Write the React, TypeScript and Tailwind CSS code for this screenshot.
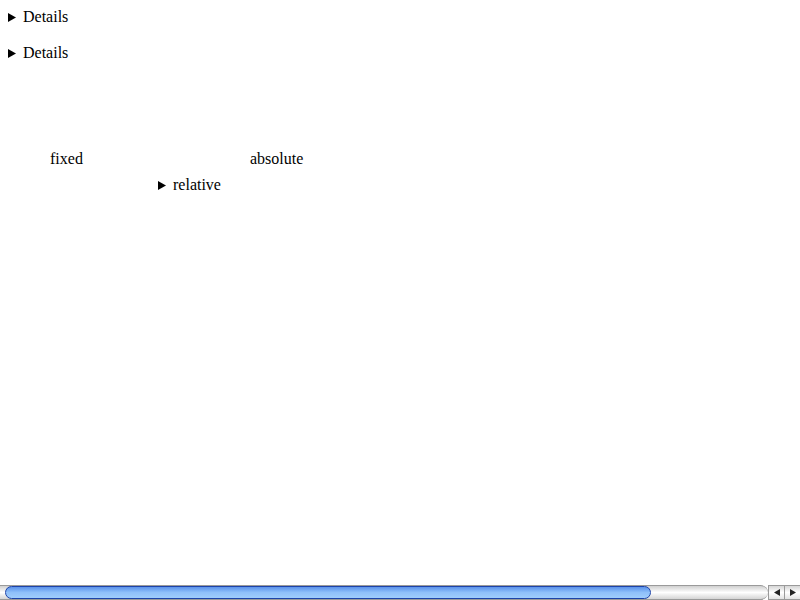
function Marker() {
  return (
    <svg width="8" height="9" viewBox="0 0 8 9" className="shrink-0">
      <path d="M0 0L8 4.5L0 9z" fill="#000" />
    </svg>
  );
}

function Toggle({ label }: { label: string }) {
  return (
    <details>
      <summary className="flex list-none items-center gap-[7px] leading-[18px] [&::-webkit-details-marker]:hidden">
        <Marker />
        <span>{label}</span>
      </summary>
    </details>
  );
}

export default function App() {
  return (
    <div className="flex h-screen w-full flex-col bg-white font-['Liberation_Serif'] text-base text-black">
      <div className="flex flex-col gap-[18px] px-2 pt-2">
        <Toggle label="Details" />
        <Toggle label="Details" />
      </div>

      <div className="mt-[88px] flex leading-[18px]">
        <div className="w-[250px] pl-[50px]">fixed</div>
        <div>absolute</div>
      </div>
      <div className="mt-2 pl-[158px]">
        <Toggle label="relative" />
      </div>

      {/* horizontal scrollbar */}
      <div className="mt-auto flex h-[15px] w-full">
        <div className="flex flex-1 items-center rounded-r-full border-y border-[#9a9a9a] bg-linear-to-b from-[#d0d0d0] via-white to-[#d4d4d4]">
          <div className="ml-[5px] h-[13px] w-[646px] rounded-full border border-[#1d43a8] bg-linear-to-b from-[#5b92ea] via-[#8fc0fa] to-[#9fcdfc]" />
        </div>
        <div className="flex w-4 items-center justify-center border-y border-l border-[#9a9a9a] bg-linear-to-b from-[#d6d6d6] via-white to-[#e2e2e2]">
          <svg width="6" height="7" viewBox="0 0 6 7">
            <path d="M0 3.5L6 0v7z" fill="#222" />
          </svg>
        </div>
        <div className="flex w-4 items-center justify-center border-y border-l border-[#9a9a9a] bg-linear-to-b from-[#d6d6d6] via-white to-[#e2e2e2]">
          <svg width="6" height="7" viewBox="0 0 6 7">
            <path d="M6 3.5L0 0v7z" fill="#222" />
          </svg>
        </div>
      </div>
    </div>
  );
}
